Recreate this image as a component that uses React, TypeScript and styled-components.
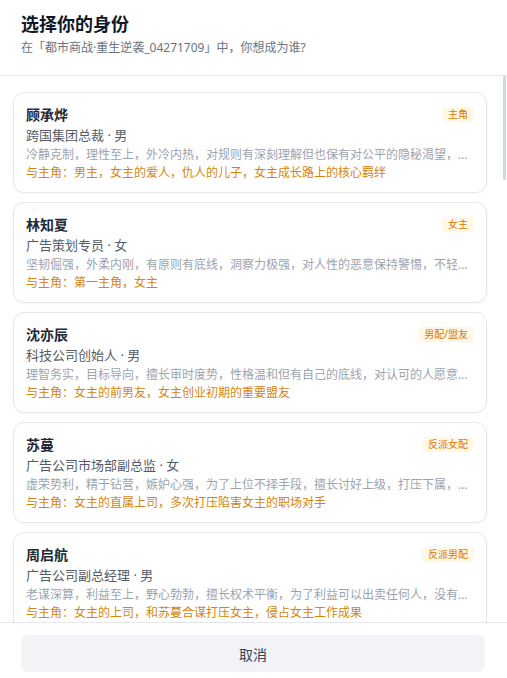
import styled, { createGlobalStyle } from "styled-components";

const ROLES = [
  {
    id: 1,
    name: "顾承烨",
    tag: "主角",
    job: "跨国集团总裁 · 男",
    desc: "冷静克制，理性至上，外冷内热，对规则有深刻理解但也保有对公平的隐秘渴望，习惯把情绪藏在决策背后",
    relation: "与主角：男主，女主的爱人，仇人的儿子，女主成长路上的核心羁绊",
  },
  {
    id: 2,
    name: "林知夏",
    tag: "女主",
    job: "广告策划专员 · 女",
    desc: "坚韧倔强，外柔内刚，有原则有底线，洞察力极强，对人性的恶意保持警惕，不轻易认输",
    relation: "与主角：第一主角，女主",
  },
  {
    id: 3,
    name: "沈亦辰",
    tag: "男配/盟友",
    job: "科技公司创始人 · 男",
    desc: "理智务实，目标导向，擅长审时度势，性格温和但有自己的底线，对认可的人愿意倾力相助",
    relation: "与主角：女主的前男友，女主创业初期的重要盟友",
  },
  {
    id: 4,
    name: "苏蔓",
    tag: "反派女配",
    job: "广告公司市场部副总监 · 女",
    desc: "虚荣势利，精于钻营，嫉妒心强，为了上位不择手段，擅长讨好上级，打压下属，笑里藏刀",
    relation: "与主角：女主的直属上司，多次打压陷害女主的职场对手",
  },
  {
    id: 5,
    name: "周启航",
    tag: "反派男配",
    job: "广告公司副总经理 · 男",
    desc: "老谋深算，利益至上，野心勃勃，擅长权术平衡，为了利益可以出卖任何人，没有真正的朋友",
    relation: "与主角：女主的上司，和苏蔓合谋打压女主，侵占女主工作成果",
  },
];

const GlobalStyle = createGlobalStyle`
  html, body {
    margin: 0;
    padding: 0;
    background: #ffffff;
  }
  body {
    font-family: "Noto Sans", "Noto Sans CJK SC", "Liberation Sans", sans-serif;
    color: #111827;
  }
`;

const App = () => {
  return (
    <>
      <GlobalStyle />
      <Dialog>
        <Header>
          <Title>选择你的身份</Title>
          <Subtitle>在「都市商战·重生逆袭_04271709」中，你想成为谁?</Subtitle>
        </Header>
        <ListWrap>
          <List>
            {ROLES.map(({ id, name, tag, job, desc, relation }) => (
              <Card key={id}>
                <NameRow>
                  <Name>{name}</Name>
                  <Tag>{tag}</Tag>
                </NameRow>
                <Job>{job}</Job>
                <Desc>{desc}</Desc>
                <Relation>{relation}</Relation>
              </Card>
            ))}
          </List>
          <ScrollThumb />
        </ListWrap>
        <Footer>
          <CancelButton>取消</CancelButton>
        </Footer>
      </Dialog>
    </>
  );
};

const Dialog = styled.div`
  display: flex;
  flex-direction: column;
  height: 678px;
  background: #ffffff;
  overflow: hidden;
`;

const Header = styled.div`
  padding: 12px 20px 18px 21px;
  border-bottom: 1px solid #e5e7eb;
  flex-shrink: 0;
`;

const Title = styled.div`
  height: 24px;
  font-size: 18px;
  line-height: 24px;
  font-weight: 700;
  color: #111827;
`;

const Subtitle = styled.div`
  margin-top: 3px;
  height: 18px;
  font-size: 12px;
  line-height: 18px;
  color: #6b7280;
`;

const ListWrap = styled.div`
  position: relative;
  flex: 1;
  min-height: 0;
`;

const List = styled.div`
  height: 100%;
  box-sizing: border-box;
  overflow-y: auto;
  padding: 16px 20px 16px 13px;
  display: flex;
  flex-direction: column;
  gap: 9px;
  scrollbar-width: none;

  &::-webkit-scrollbar {
    display: none;
  }
`;

const ScrollThumb = styled.div`
  position: absolute;
  top: 0;
  right: 1px;
  width: 3px;
  height: 104px;
  border-radius: 1px;
  background: #cfd8e3;
`;

const Card = styled.div`
  flex-shrink: 0;
  padding: 12px 12px 10px 12px;
  border: 1px solid #e5e7eb;
  border-radius: 11px;
  background: #ffffff;
  box-shadow: 0 1px 2px rgba(15, 23, 42, 0.03);
`;

const NameRow = styled.div`
  display: flex;
  align-items: center;
  justify-content: space-between;
  height: 20px;
`;

const Name = styled.div`
  height: 20px;
  font-size: 14px;
  line-height: 20px;
  font-weight: 700;
  color: #1f2937;
`;

const Tag = styled.span`
  height: 15px;
  margin-top: -2px;
  padding: 0 6px;
  border-radius: 4px;
  background: #fff8e6;
  color: #d97706;
  font-size: 10px;
  line-height: 15px;
  overflow: hidden;
`;

const Job = styled.div`
  margin-top: 1px;
  height: 18px;
  font-size: 13px;
  line-height: 18px;
  color: #555b66;
  overflow: hidden;
`;

const Desc = styled.div`
  margin-top: 2px;
  height: 18px;
  font-size: 12px;
  line-height: 18px;
  color: #9ca3af;
  white-space: nowrap;
  overflow: hidden;
  text-overflow: ellipsis;
`;

const Relation = styled.div`
  height: 18px;
  font-size: 12px;
  line-height: 18px;
  color: #d58512;
  white-space: nowrap;
  overflow: hidden;
  text-overflow: ellipsis;
`;

const Footer = styled.div`
  flex-shrink: 0;
  padding: 12px 22px 6px 21px;
  border-top: 1px solid #e5e7eb;
  background: #ffffff;
`;

const CancelButton = styled.button`
  display: block;
  width: 100%;
  height: 37px;
  border: none;
  border-radius: 8px;
  background: #f1f3f7;
  color: #374151;
  font-family: inherit;
  font-size: 14px;
  cursor: pointer;
`;

export default App;
